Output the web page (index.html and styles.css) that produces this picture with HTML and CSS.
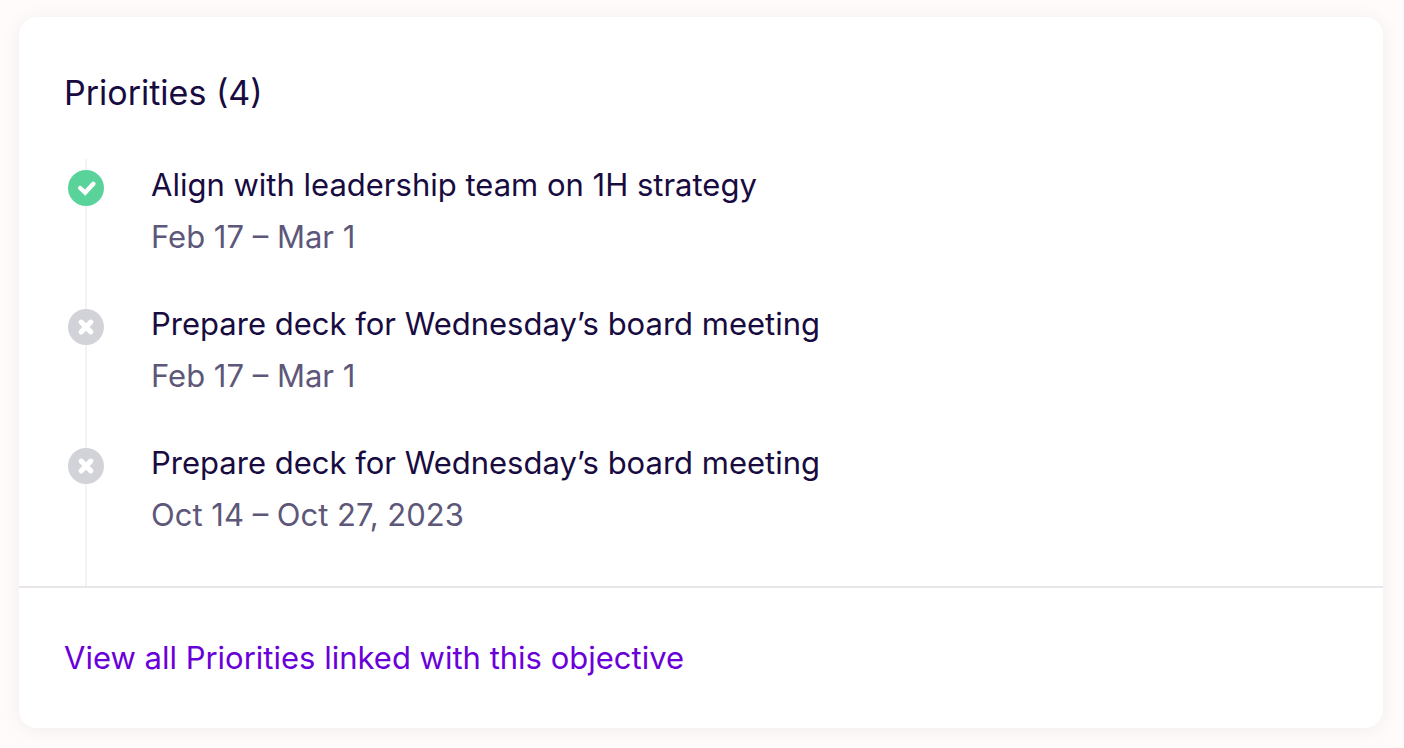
FILE: index.html
```html
<!DOCTYPE html>
<html lang="en">
<head>
    <meta charset="UTF-8">
    <meta name="viewport" content="width=device-width, initial-scale=1.0">
    <title>Priorities</title>
    <link rel="stylesheet" href="styles.css">
</head>
<body>
    <section class="card">
        <div class="card-body">
            <h2 class="card-title">Priorities (4)</h2>

            <ul class="timeline">
                <li class="priority">
                    <svg class="status done" viewBox="0 0 36 36" role="img" aria-label="Done">
                        <circle cx="18" cy="18" r="18"/>
                        <path d="M12.2 18L17.2 22.6L25.4 13.8"/>
                    </svg>
                    <div class="priority-text">
                        <h3 class="priority-name">Align with leadership team on 1H strategy</h3>
                        <p class="priority-date">Feb 17 – Mar 1</p>
                    </div>
                </li>
                <li class="priority">
                    <svg class="status missed" viewBox="0 0 36 36" role="img" aria-label="Not done">
                        <circle cx="18" cy="18" r="18"/>
                        <path d="M13.2 13.2L22.8 22.8M22.8 13.2L13.2 22.8"/>
                    </svg>
                    <div class="priority-text">
                        <h3 class="priority-name">Prepare deck for Wednesday’s board meeting</h3>
                        <p class="priority-date">Feb 17 – Mar 1</p>
                    </div>
                </li>
                <li class="priority">
                    <svg class="status missed" viewBox="0 0 36 36" role="img" aria-label="Not done">
                        <circle cx="18" cy="18" r="18"/>
                        <path d="M13.2 13.2L22.8 22.8M22.8 13.2L13.2 22.8"/>
                    </svg>
                    <div class="priority-text">
                        <h3 class="priority-name">Prepare deck for Wednesday’s board meeting</h3>
                        <p class="priority-date">Oct 14 – Oct 27, 2023</p>
                    </div>
                </li>
            </ul>
        </div>

        <div class="card-footer">
            <a href="#" class="view-all">View all Priorities linked with this objective</a>
        </div>
    </section>
</body>
</html>
```

FILE: styles.css
```css
* {
    margin: 0;
    padding: 0;
    box-sizing: border-box;
}

body {
    font-family: Inter, "Liberation Sans", sans-serif;
    font-size: 31px;
    line-height: 52px;
    color: #180b3f;
    background: #fffbfa;
    padding: 17px 21px 19px 19px;
}

.card {
    background: #fff;
    border-radius: 18px;
    box-shadow: 0 2px 20px rgba(30, 15, 30, 0.06);
}

.card-body {
    padding: 44px 45px 0;
}

.card-title {
    font-size: 34px;
    font-weight: 400;
    line-height: 64px;
    margin-bottom: 34px;
}

/* vertical line runs behind the status icons */
.timeline {
    list-style: none;
    display: flex;
    flex-direction: column;
    gap: 35px;
    padding: 0 4px 45px;
    background: linear-gradient(#f3f3f4, #f3f3f4) 21px 0 / 2px 100% no-repeat;
}

.priority {
    display: flex;
    gap: 47px;
}

.status {
    flex: none;
    width: 36px;
    height: 36px;
    margin-top: 11px;
}

.status path {
    fill: none;
    stroke: #fff;
    stroke-linecap: round;
}

.done circle {
    fill: #5ad39a;
}

.done path {
    stroke-width: 4.4;
}

.missed circle {
    fill: #d2d3d8;
}

.missed path {
    stroke-width: 5.2;
}

.priority-name {
    font-size: 31px;
    font-weight: 400;
}

.priority-date {
    color: #5d5779;
}

.card-footer {
    border-top: 2px solid #e9e6e9;
    padding: 44px 45px;
}

.view-all {
    color: #6a00d9;
    text-decoration: none;
}

.view-all:hover {
    text-decoration: underline;
}
```
